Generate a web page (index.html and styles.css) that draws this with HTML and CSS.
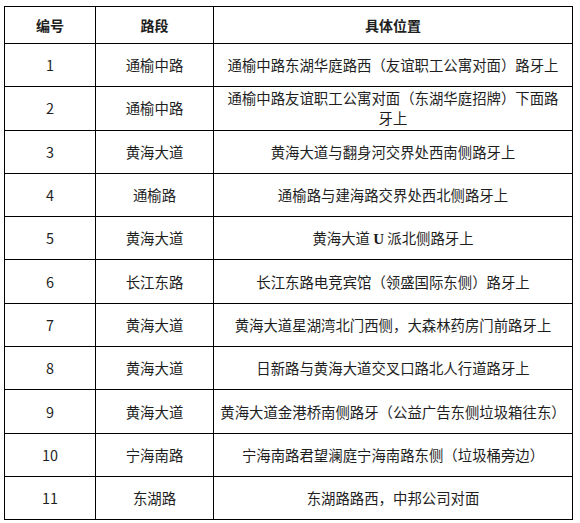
FILE: index.html
```html
<!DOCTYPE html>
<html lang="zh-CN">
<head>
<meta charset="utf-8">
<link rel="stylesheet" href="styles.css">
</head>
<body>
<div class="page">
<table class="list">
<colgroup><col class="c-no"><col class="c-road"><col class="c-pos"></colgroup>
<thead>
<tr class="head"><th>编号</th><th>路段</th><th>具体位置</th></tr>
</thead>
<tbody>
<tr class="r"><td>1</td><td>通榆中路</td><td>通榆中路东湖华庭路西（友谊职工公寓对面）路牙上</td></tr>
<tr class="r"><td>2</td><td>通榆中路</td><td><div class="stack"><span>通榆中路友谊职工公寓对面（东湖华庭招牌）下面路</span><span>牙上</span></div></td></tr>
<tr class="r"><td>3</td><td>黄海大道</td><td>黄海大道与翻身河交界处西南侧路牙上</td></tr>
<tr class="r"><td>4</td><td>通榆路</td><td>通榆路与建海路交界处西北侧路牙上</td></tr>
<tr class="r"><td>5</td><td>黄海大道</td><td>黄海大道 <span class="latin">U</span> 派北侧路牙上</td></tr>
<tr class="r"><td>6</td><td>长江东路</td><td>长江东路电竞宾馆（领盛国际东侧）路牙上</td></tr>
<tr class="r"><td>7</td><td>黄海大道</td><td>黄海大道星湖湾北门西侧，大森林药房门前路牙上</td></tr>
<tr class="r"><td>8</td><td>黄海大道</td><td>日新路与黄海大道交叉口路北人行道路牙上</td></tr>
<tr class="r"><td>9</td><td>黄海大道</td><td>黄海大道金港桥南侧路牙（公益广告东侧垃圾箱往东）</td></tr>
<tr class="r"><td>10</td><td>宁海南路</td><td>宁海南路君望澜庭宁海南路东侧（垃圾桶旁边）</td></tr>
<tr class="r"><td>11</td><td>东湖路</td><td>东湖路路西，中邦公司对面</td></tr>
</tbody>
</table>
</div>
</body>
</html>
```
FILE: styles.css
```css
html, body {
  margin: 0;
  padding: 0;
  background: #ffffff;
}
.page {
  padding: 6px 0 0 4px;
}
.list {
  border-collapse: collapse;
  table-layout: fixed;
  width: 568px;
  font-family: "Noto Sans CJK SC", sans-serif;
  font-size: 14.4px;
  color: #1e1e1e;
}
.c-no { width: 91px; }
.c-road { width: 118px; }
.c-pos { width: 359px; }
.list th, .list td {
  border: 1px solid #000;
  text-align: center;
  vertical-align: middle;
  padding: 0 4px;
  line-height: 20px;
  white-space: nowrap;
}
.list th {
  font-weight: bold;
  font-size: 14px;
}
.head { height: 37px; }
.r { height: 43.3px; }
.stack {
  display: flex;
  flex-direction: column;
  align-items: center;
}
.latin {
  font-family: "Liberation Serif", serif;
  font-weight: bold;
  font-size: 15px;
}
```
